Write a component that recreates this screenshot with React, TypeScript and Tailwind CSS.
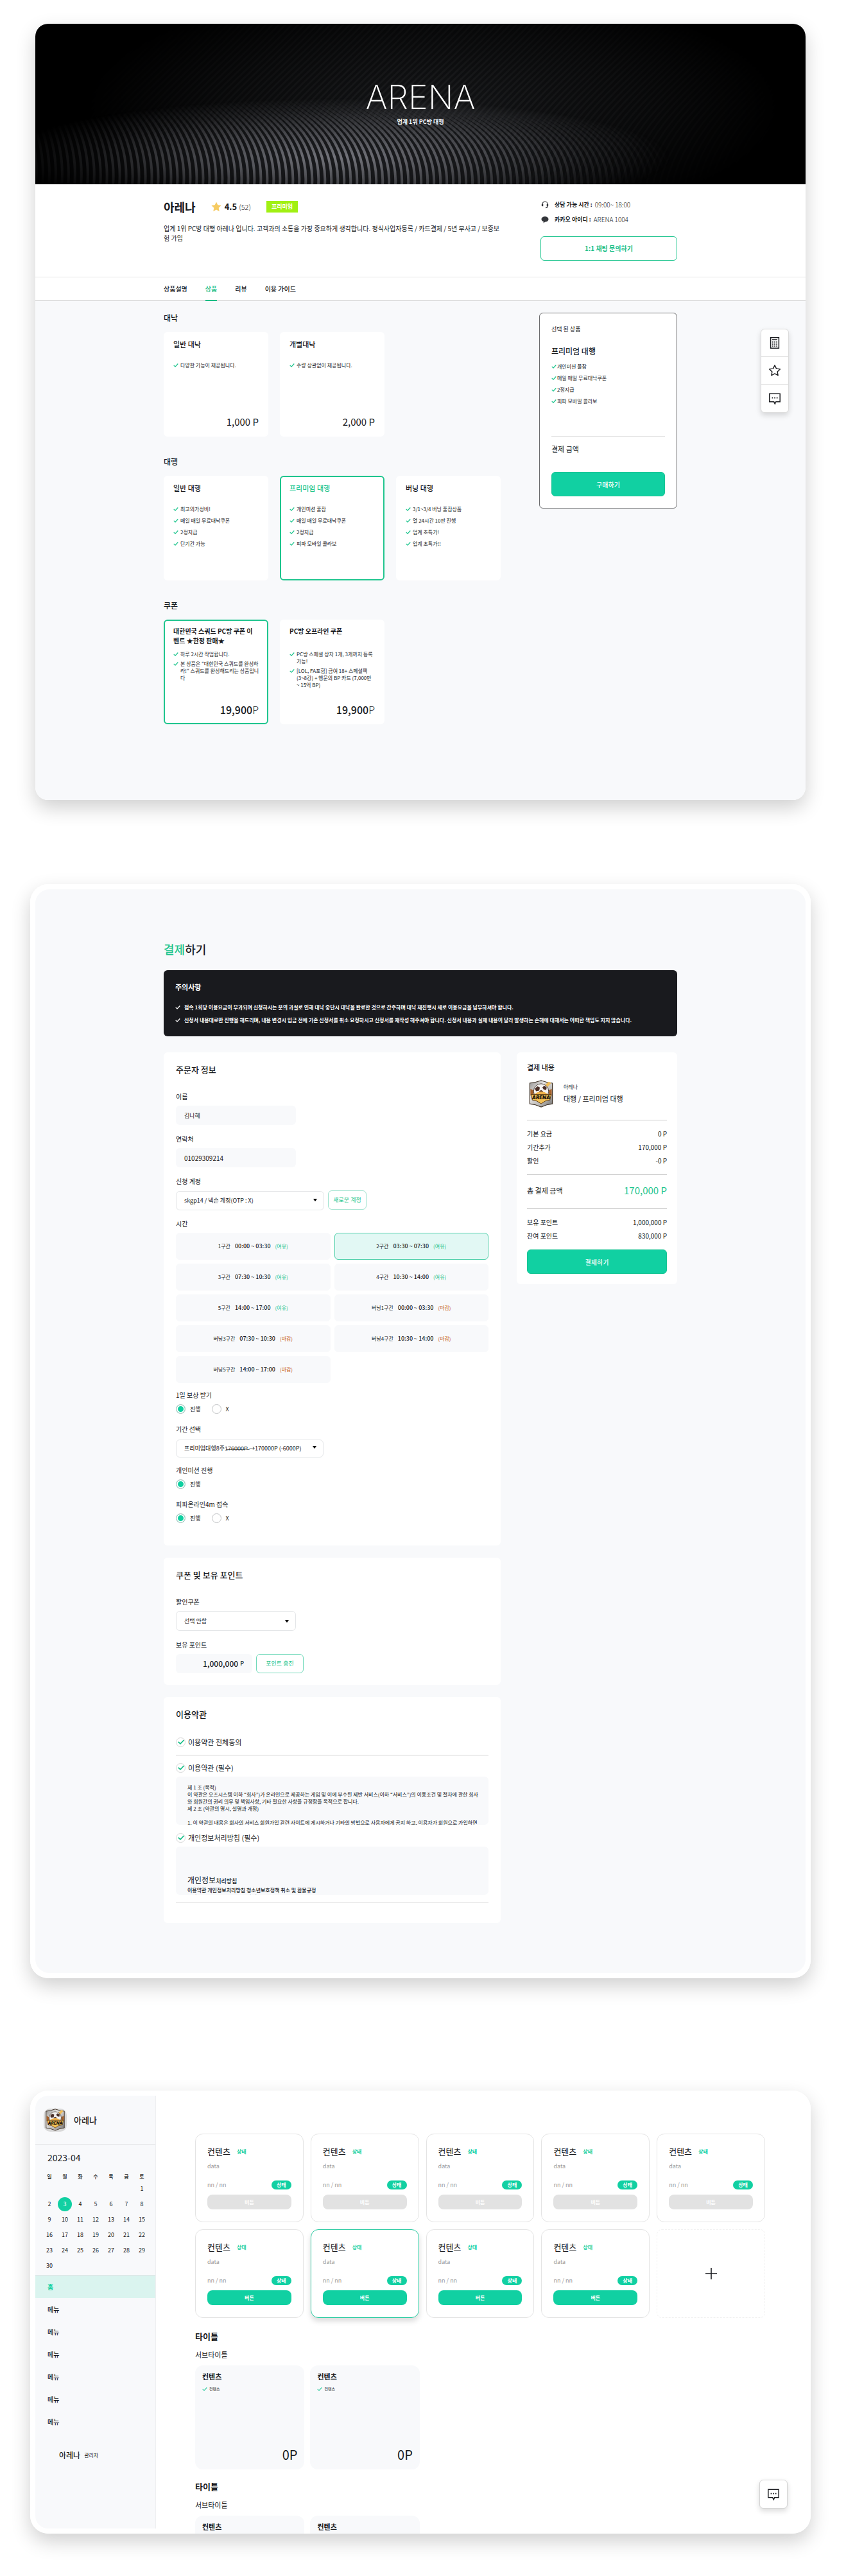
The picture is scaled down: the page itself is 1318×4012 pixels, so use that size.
import { useState, type ReactNode } from "react";

type Plan = { name: string; items: string[][]; price?: string; selected?: boolean };

const dealPlans: Plan[] = [
  { name: "일반 대낙", items: [["다양한 기능이 제공됩니다."]], price: "1,000 P" },
  { name: "개별대낙", items: [["수량 상관없이 제공됩니다."]], price: "2,000 P" },
];

const agencyPlans: Plan[] = [
  { name: "일반 대행", items: [["최고의가성비!"], ["매일 매일 무료대낙쿠폰"], ["2정지급"], ["단기간 가능"]] },
  {
    name: "프리미엄 대행",
    items: [["개인미션 풀참"], ["매일 매일 무료대낙쿠폰"], ["2정지급"], ["피파 모바일 콜라보"]],
    selected: true,
  },
  {
    name: "버닝 대행",
    items: [["3/1~3/4 버닝 풀참상품"], ["열 24시간 10판 진행"], ["업계 초특가!"], ["업계 초특가!!"]],
  },
];

const coupons = [
  {
    title: ["대한민국 스쿼드 PC방 쿠폰 이", "벤트 ★한정 판매★"],
    items: [["하루 2시간 작업합니다."], ['본 상품은 "대한민국 스쿼드를 완성하', '라!" 스쿼드를 완성해드리는 상품입니', "다"]],
    selected: true,
  },
  {
    title: ["PC방 오프라인 쿠폰"],
    items: [
      ["PC방 스페셜 상자 1개, 3개까지 등록", "가능!"],
      ["[LOL, FA포함] 금여 18+ 스페셜팩", "(3~8강) + 행운의 BP 카드 (7,000만", "~ 15억 BP)"],
    ],
    selected: false,
  },
];

const slots = [
  ["1구간", "00:00 ~ 03:30", true],
  ["2구간", "03:30 ~ 07:30", true],
  ["3구간", "07:30 ~ 10:30", true],
  ["4구간", "10:30 ~ 14:00", true],
  ["5구간", "14:00 ~ 17:00", true],
  ["버닝1구간", "00:00 ~ 03:30", false],
  ["버닝3구간", "07:30 ~ 10:30", false],
  ["버닝4구간", "10:30 ~ 14:00", false],
  ["버닝5구간", "14:00 ~ 17:00", false],
] as const;

const strike = (s: string) => s.split("").map((c) => c + "\u0336").join("");

function Check({ className = "" }: { className?: string }) {
  return (
    <svg viewBox="0 0 8 8" className={`size-2 shrink-0 ${className}`} fill="none" stroke="currentColor" strokeWidth="1.3" aria-hidden>
      <path d="M.7 3.9 3 6.1 7.3 1.5" />
    </svg>
  );
}

function Lines({ lines }: { lines: string[] }) {
  return (
    <span>
      {lines.map((l) => (
        <span key={l} className="block whitespace-nowrap">
          {l}
        </span>
      ))}
    </span>
  );
}

function ChatIcon() {
  return (
    <svg viewBox="0 0 20 20" className="size-5" fill="none" stroke="#1b1c20" strokeWidth="1.5" aria-hidden>
      <path d="M1.8 2.2h16.4v12.6h-6.4L10.3 18l-1.6-3.2H1.8z" />
      <path d="M5.6 8.6h1.7M9.2 8.6h1.7M12.8 8.6h1.7" strokeWidth="1.7" />
    </svg>
  );
}

function CalcIcon() {
  return (
    <svg viewBox="0 0 20 20" className="size-5" fill="none" stroke="#1b1c20" strokeWidth="1.5" aria-hidden>
      <path d="M3.6 1.7h12.8v16.6H3.6z" />
      <path d="M6 5h8" strokeWidth="1.4" />
      <path d="M6 8.6h1.8M9.1 8.6h1.8M12.2 8.6H14M6 11.8h1.8M9.1 11.8h1.8M12.2 11.8H14M6 15h1.8M9.1 15h1.8M12.2 15H14" strokeWidth="1.7" />
    </svg>
  );
}

function StarIcon() {
  return (
    <svg viewBox="0 0 20 20" className="size-5" fill="none" stroke="#1b1c20" strokeWidth="1.4" strokeLinejoin="round" aria-hidden>
      <path d="m10 1.8 2.5 5.3 5.8.8-4.2 4 1 5.8-5.1-2.8-5.1 2.8 1-5.8-4.2-4 5.8-.8z" />
    </svg>
  );
}

function Emblem({ id, className }: { id: string; className: string }) {
  return (
    <svg viewBox="0 0 38 44" className={className} role="img" aria-label="ARENA 엠블럼">
      <defs>
        <linearGradient id={id} x1="0" y1="0" x2="1" y2="1">
          <stop offset="0" stopColor="#8e8d8c" />
          <stop offset=".35" stopColor="#e3e1df" />
          <stop offset=".7" stopColor="#b4b2b0" />
          <stop offset="1" stopColor="#6f6d6b" />
        </linearGradient>
      </defs>
      <path d="M1 5 10 3.6 19 .8l9 2.8L37 5v33l-9 1.6L19 43 10 39.6 1 38z" fill={`url(#${id})`} stroke="#3f3328" strokeWidth="1.2" />
      <path d="M24 9 31 2.8l4 2L27.5 13z" fill="#f0bd58" />
      <path d="M2 14l5 3v5l-5 3zM36 14l-5 3v5l5 3z" fill="#a5602a" />
      <circle cx="19" cy="18" r="12" fill="#f4f2f0" stroke="#4a403a" />
      <path d="m13 10 4 2-1 5-5 1-2-4zM24 9l4 3-1 4-4-1-2-3zM19 16l3 2-1 4h-4l-1-4z" fill="#4a2f28" />
      <path d="M8 23q11-9 22 0z" fill="#f0b24a" />
      <path d="M3 23h32l-2 9-7 1.500L19 38l-7-4.500L5 32z" fill="#f5c255" stroke="#5b3a16" />
      <text x="19" y="31" textAnchor="middle" fontFamily="Inter" fontSize="8" fontWeight="900" fontStyle="italic" fill="#18120c">
        ARENA
      </text>
    </svg>
  );
}

function HeroPattern() {
  const ribs = Array.from({ length: 130 }, (_, i) => {
    const x = -60 + i * 10;
    const lean = 12 + i * 0.7;
    return `M${x} 262C${x + 6} 215 ${x - lean * 0.2} 175 ${x - lean} 145S${x - lean * 2.4} 100 ${x - lean * 3.4} 70`;
  }).join("");
  const grain = Array.from({ length: 150 }, (_, i) => {
    const x = -240 + i * 10;
    return `M${x} 260C${x + 20} 150 ${x + 120} 90 ${x + 210} -10`;
  }).join("");
  return (
    <svg viewBox="0 0 1200 250" preserveAspectRatio="xMidYMid slice" className="absolute inset-0 size-full" aria-hidden>
      <defs>
        <radialGradient id="heroGlow" gradientUnits="userSpaceOnUse" cx="0" cy="0" r="1" gradientTransform="translate(470 208) scale(520 92)">
          <stop offset="0" stopColor="#fff" />
          <stop offset=".4" stopColor="#999" />
          <stop offset=".75" stopColor="#333" />
          <stop offset="1" stopColor="#000" />
        </radialGradient>
        <radialGradient id="heroHaze" gradientUnits="userSpaceOnUse" cx="0" cy="0" r="1" gradientTransform="translate(620 130) scale(540 190)">
          <stop offset="0" stopColor="#fff" />
          <stop offset=".6" stopColor="#777" />
          <stop offset="1" stopColor="#000" />
        </radialGradient>
        <mask id="glowMask" maskUnits="userSpaceOnUse" x="0" y="0" width="1200" height="250">
          <rect width="1200" height="250" fill="url(#heroGlow)" />
        </mask>
        <mask id="hazeMask" maskUnits="userSpaceOnUse" x="0" y="0" width="1200" height="250">
          <rect width="1200" height="250" fill="url(#heroHaze)" />
        </mask>
      </defs>
      <rect width="1200" height="250" fill="#000" />
      <g mask="url(#hazeMask)">
        <rect width="1200" height="250" fill="#131416" />
        <path d={grain} fill="none" stroke="#1e1f21" strokeWidth="3" />
      </g>
      <g mask="url(#glowMask)">
        <rect width="1200" height="250" fill="#1b1c1f" />
        <path d={ribs} fill="none" stroke="#74757c" strokeWidth="4" />
      </g>
    </svg>
  );
}

function PlanCard({ plan }: { plan: Plan }) {
  return (
    <article
      className={`flex min-h-[163px] flex-col rounded-md border-2 px-[13px] pt-[9px] pb-[11px] ${
        plan.selected ? "border-[#1fc58e] bg-white" : "border-white bg-white"
      }`}
    >
      <h3 className={`text-[11px] leading-4 font-medium ${plan.selected ? "text-[#1fc58e]" : ""}`}>{plan.name}</h3>
      <ul className="mt-[19px] space-y-[6px] text-[8px] leading-3">
        {plan.items.map((it, i) => (
          <li key={i} className="flex items-center gap-[3px]">
            <Check className="text-[#1fc58e]" />
            <Lines lines={it} />
          </li>
        ))}
      </ul>
      {plan.price && <p className="mt-auto text-right text-[15px] leading-5">{plan.price}</p>}
    </article>
  );
}

function PlanSection({ title, children }: { title: string; children: ReactNode }) {
  return (
    <section className="mb-[31px]">
      <h2 className="text-xs leading-4 font-medium">{title}</h2>
      <div className="mt-[14px] grid grid-cols-3 gap-[18px]">{children}</div>
    </section>
  );
}

function ProductPage() {
  const tabs = ["상품설명", "상품", "리뷰", "이용 가이드"];
  return (
    <main className="relative mx-2 overflow-hidden rounded-[20px] bg-[#f8f9fb]">
      <header className="relative flex h-[250px] flex-col items-center overflow-hidden text-white">
        <HeroPattern />
        <p className="relative mt-[85px] font-[Inter] text-[52px] leading-[60px] font-extralight">ARENA</p>
        <p className="relative text-[9px] leading-4 font-bold">업계 1위 PC방 대행</p>
      </header>

      <section className="border-b border-[#e3e3e3] bg-white">
        <div className="mx-auto flex max-w-[800px] justify-between pb-[25px]">
          <div className="w-[525px] pt-[25px]">
            <div className="flex h-5 items-center">
              <h1 className="text-lg leading-5 font-bold">아레나</h1>
              <svg viewBox="0 0 16 16" className="ml-6 size-4" fill="#f6cb62" aria-hidden>
                <path d="m8 .4 2.300 4.900 5.300.7-3.900 3.700 1 5.500L8 12.600l-4.700 2.600 1-5.500L.4 6l5.300-.7z" />
              </svg>
              <span className="ml-[5px] text-[13px] font-bold">4.5</span>
              <span className="ml-[3px] text-[11px] font-light">(52)</span>
              <span className="ml-6 flex h-[18px] w-[49px] items-center justify-center bg-[#a1f013] text-[9px] font-bold text-white">프리미엄</span>
            </div>
            <p className="mt-4 text-[10px] leading-[15px]">
              업계 1위 PC방 대행 아레나 입니다. 고객과의 소통을 가장 중요하게 생각합니다. 정식사업자등록 / 카드결제 / 5년 무사고 / 보증보
              <br />험 가입
            </p>
          </div>
          <div className="w-[213px] pt-[22px] text-[9px] leading-5">
            <p className="flex items-center">
              <svg viewBox="0 0 12 12" className="ml-[1px] size-3" fill="none" stroke="#34363b" aria-hidden>
                <path d="M2 6V5a4 4 0 0 1 8 0v3.500q0 2-3 2.200" strokeWidth="1.200" />
                <path d="M1.500 5v3M2.600 5v3.300M10.500 5v3M9.400 5v3.300" strokeWidth="1.300" />
              </svg>
              <b className="ml-[9px] font-bold">상담 가능 시간 :</b>
              <span className="ml-1 text-[10px] font-light">09:00~ 18:00</span>
            </p>
            <p className="mt-[3px] flex items-center">
              <svg viewBox="0 0 12 12" className="ml-[1px] size-3" fill="#34363b" aria-hidden>
                <path d="M6 1.300c3.100 0 5.500 1.900 5.500 4.200S9.100 9.700 6 9.700L3.600 11.400l.3-2.200C1.800 8.500.5 7.200.5 5.500.5 3.200 2.900 1.300 6 1.300z" />
              </svg>
              <b className="ml-[9px] font-bold">카카오 아이디 :</b>
              <span className="ml-1 text-[10px] font-light">ARENA 1004</span>
            </p>
            <button className="mt-4 h-[38px] w-full rounded-md border border-[#1fc58e] text-[10px] font-bold text-[#12bd85]">1:1 채팅 문의하기</button>
          </div>
        </div>
      </section>

      <nav className="border-b border-[#c4c4c4] bg-white">
        <ul className="mx-auto flex h-9 max-w-[800px] gap-7 text-[10px] font-medium">
          {tabs.map((t, i) => (
            <li key={t}>
              <a
                href="#products"
                className={`-mb-px flex h-[37px] items-center border-b-2 ${i === 1 ? "border-[#12bd85] text-[#12bd85]" : "border-transparent"}`}
              >
                {t}
              </a>
            </li>
          ))}
        </ul>
      </nav>

      <div id="products" className="mx-auto flex max-w-[800px] items-start justify-between pt-[18px] pb-[87px]">
        <div className="w-[525px]">
          <PlanSection title="대낙">
            {dealPlans.map((p) => (
              <PlanCard key={p.name} plan={p} />
            ))}
          </PlanSection>
          <PlanSection title="대행">
            {agencyPlans.map((p) => (
              <PlanCard key={p.name} plan={p} />
            ))}
          </PlanSection>
          <PlanSection title="쿠폰">
            {coupons.map((c) => (
              <article
                key={c.title[0]}
                className={`flex min-h-[163px] flex-col rounded-md border-2 bg-white px-[13px] pt-2 pb-[11px] ${
                  c.selected ? "border-[#1fc58e]" : "border-white"
                }`}
              >
                <h3 className="min-h-[30px] text-[10px] leading-[15px] font-semibold">
                  <Lines lines={c.title} />
                </h3>
                <ul className="mt-2 space-y-1 text-[8px] leading-[11px]">
                  {c.items.map((it) => (
                    <li key={it[0]} className="flex gap-[3px]">
                      <Check className="mt-[2px] text-[#1fc58e]" />
                      <Lines lines={it} />
                    </li>
                  ))}
                </ul>
                <p className="mt-auto text-right text-base leading-5 font-medium">
                  19,900<span className="font-light">P</span>
                </p>
              </article>
            ))}
          </PlanSection>
        </div>

        <aside className="w-[215px] rounded-md border border-[#6b6c6e] bg-white px-[18px] pt-[17px] pb-[18px]">
          <p className="text-[9px] leading-4">선택 된 상품</p>
          <h2 className="mt-4 text-xs leading-5 font-medium">프리미엄 대행</h2>
          <ul className="mt-2 space-y-[6px] text-[8px] leading-3">
            {agencyPlans[1].items.map((it) => (
              <li key={it[0]} className="flex items-center gap-px">
                <Check className="text-[#1fc58e]" />
                {it[0]}
              </li>
            ))}
          </ul>
          <p className="mt-12 border-t border-[#dfdfdf] pt-[9px] text-[11px] leading-5">결제 금액</p>
          <button className="mt-[26px] h-[38px] w-full rounded-md border border-[#17c493] bg-[#11d0a2] text-[10px] font-medium text-white">구매하기</button>
        </aside>
      </div>

      <div className="absolute top-[475px] right-[26px] w-11 divide-y divide-[#e0e0e0] overflow-hidden rounded-md border border-[#dcdcdc] bg-white shadow-[0_4px_8px_rgba(0,0,0,0.14)]">
        {[
          ["계산기", <CalcIcon key="c" />],
          ["즐겨찾기", <StarIcon key="s" />],
          ["채팅", <ChatIcon key="t" />],
        ].map(([label, icon]) => (
          <button key={label as string} aria-label={label as string} className="flex h-[43px] w-full items-center justify-center">
            {icon}
          </button>
        ))}
      </div>
    </main>
  );
}

function SelectBox({ id, value, className }: { id: string; value: string; className: string }) {
  return (
    <div className={`relative ${className}`}>
      <select id={id} className="size-full appearance-none rounded-md border border-[#e4e6e8] bg-white pl-3 text-[9px]">
        <option>{value}</option>
      </select>
      <svg viewBox="0 0 6 4" className="pointer-events-none absolute top-1/2 right-[11px] h-1 w-[6px] -translate-y-1/2" aria-hidden>
        <path d="M0 0h6L3.600 3.400a.8.8 0 0 1-1.200 0z" />
      </svg>
    </div>
  );
}

function RadioRow({ legend, name, options, className }: { legend: string; name: string; options: string[]; className: string }) {
  return (
    <fieldset className={className}>
      <legend className="text-[10px] leading-[14px]">{legend}</legend>
      <div className="mt-[7px] flex gap-[17px]">
        {options.map((o, i) => (
          <label key={o} className="flex items-center gap-[7px] text-[9px] leading-[15px]">
            <input
              type="radio"
              name={name}
              defaultChecked={i === 0}
              className="size-[15px] appearance-none rounded-full border border-[#c2c4c6] shadow-[inset_0_0_0_2px_white] checked:bg-[#10cfa0]"
            />
            {o}
          </label>
        ))}
      </div>
    </fieldset>
  );
}

function Agree({ label, className }: { label: string; className: string }) {
  return (
    <label className={`flex items-center gap-1 text-[11px] leading-4 ${className}`}>
      <span className="relative flex size-[15px] items-center justify-center">
        <input type="checkbox" defaultChecked className="peer size-[15px] appearance-none rounded-full border border-[#d8d8d8]" />
        <svg viewBox="0 0 10 10" className="pointer-events-none absolute hidden size-[10px] peer-checked:block" fill="none" stroke="#12bd85" strokeWidth="1.700" aria-hidden>
          <path d="M.7 4.900 4 7.900 9.600 2" />
        </svg>
      </span>
      {label}
    </label>
  );
}

function SumRow({ label, value }: { label: string; value: string }) {
  return (
    <div className="flex justify-between leading-[21px]">
      <dt className="text-[10px]">{label}</dt>
      <dd className="text-[10px]">{value}</dd>
    </div>
  );
}

function CheckoutPage() {
  const [slot, setSlot] = useState(1);
  const label = "block text-[10px] leading-[14px]";
  return (
    <main className="rounded-[28px] bg-white p-2">
      <div className="rounded-[22px] bg-[#f8f9fb] pt-20 pb-[78px]">
        <div className="mx-auto max-w-[800px]">
          <h1 className="text-lg leading-[26px] font-medium">
            <span className="text-[#1fc58e]">결제</span>하기
          </h1>
          <section className="mt-5 rounded-md bg-[#191a1e] px-[18px] pt-[18px] pb-[15px] text-white">
            <h2 className="text-[11px] leading-4 font-bold">주의사항</h2>
            <ul className="mt-[14px] text-[8px] leading-5 font-bold whitespace-nowrap">
              {[
                "접속 1회당 이용요금이 부과되며 신청하시는 분의 과실로 인해 대낙 중단시 대낙을 완료한 것으로 간주하며 대낙 재진행시 새로 이용요금을 납부하셔야 합니다.",
                "신청서 내용대로만 진행을 해드리며, 내용 변경시 입금 전에 기존 신청서를 취소 요청하시고 신청서를 재작성 해주셔야 합니다. 신청서 내용과 실제 내용이 달라 발생하는 손해에 대해서는 어떠한 책임도 지지 않습니다.",
              ].map((t) => (
                <li key={t} className="flex items-center gap-[6px]">
                  <Check />
                  {t}
                </li>
              ))}
            </ul>
          </section>

          <div className="mt-[25px] flex items-start gap-[25px]">
            <form className="min-w-0 flex-1 space-y-[19px]" onSubmit={(e) => e.preventDefault()}>
              <section className="rounded-md bg-white px-[19px] pt-[17px] pb-[35px]">
                <h2 className="text-[13px] leading-5 font-medium">주문자 정보</h2>
                <label htmlFor="name" className={`${label} mt-[25px]`}>
                  이름
                </label>
                <input id="name" defaultValue="김나혜" className="mt-[7px] h-[30px] w-[187px] rounded-md bg-[#f8f9fb] px-[13px] text-[9px]" />
                <label htmlFor="phone" className={`${label} mt-[15px]`}>
                  연락처
                </label>
                <input id="phone" defaultValue="01029309214" className="mt-[7px] h-[30px] w-[187px] rounded-md bg-[#f8f9fb] px-[13px] text-[10px]" />
                <label htmlFor="account" className={`${label} mt-[15px]`}>
                  신청 계정
                </label>
                <div className="mt-[7px] flex gap-[6px]">
                  <SelectBox id="account" value="skgp14 / 넥슨 계정(OTP : X)" className="h-[30px] w-[231px]" />
                  <button className="h-[30px] w-[60px] rounded-md border border-[#9fe2ce] text-[9px] text-[#1fc58e]">새로운 계정</button>
                </div>
                <p className={`${label} mt-[15px]`}>시간</p>
                <div className="mt-[7px] grid grid-cols-2 gap-[6px]">
                  {slots.map(([name, time, open], i) => (
                    <button
                      key={name}
                      aria-pressed={slot === i}
                      onClick={() => setSlot(i)}
                      className={`flex h-[42px] items-center justify-center gap-[7px] rounded-md border text-[8px] ${
                        slot === i ? "border-[#4fcfa9] bg-[#e2f8f4]" : "border-[#f8f9fb] bg-[#f8f9fb]"
                      }`}
                    >
                      <span>{name}</span>
                      <span className="text-[9px] font-medium">{time}</span>
                      <span className={open ? "text-[#1fc58e]" : "text-[#c8641c]"}>{open ? "(여유)" : "(마감)"}</span>
                    </button>
                  ))}
                </div>
                <RadioRow className="mt-3" legend="1일 보상 받기" name="reward" options={["진행", "X"]} />
                <label htmlFor="period" className={`${label} mt-[17px]`}>
                  기간 선택
                </label>
                <SelectBox id="period" value={`프리미엄대행8주${strike("176000P")} →170000P (-6000P)`} className="mt-[7px] h-7 w-[230px]" />
                <RadioRow className="mt-[15px]" legend="개인미션 진행" name="mission" options={["진행"]} />
                <RadioRow className="mt-[17px]" legend="피파온라인4m 접속" name="mobile" options={["진행", "X"]} />
              </section>

              <section className="rounded-md bg-white px-[19px] pt-[17px] pb-[18px]">
                <h2 className="text-[13px] leading-5 font-medium">쿠폰 및 보유 포인트</h2>
                <label htmlFor="coupon" className={`${label} mt-[25px]`}>
                  할인쿠폰
                </label>
                <SelectBox id="coupon" value="선택 안함" className="mt-[7px] h-[31px] w-[187px]" />
                <p className={`${label} mt-[15px]`}>보유 포인트</p>
                <div className="mt-[7px] flex gap-[6px]">
                  <p className="flex h-[30px] w-[119px] items-center justify-end gap-[3px] rounded-md bg-[#f8f9fb] pr-[13px] text-xs font-medium">
                    1,000,000 <span className="text-[9px]">P</span>
                  </p>
                  <button className="h-[30px] w-[74px] rounded-md border border-[#6fd9b9] text-[9px] text-[#1fc58e]">포인트 충전</button>
                </div>
              </section>

              <section className="rounded-md bg-white px-[19px] pt-[17px] pb-[31px]">
                <h2 className="text-[13px] leading-5 font-medium">이용약관</h2>
                <Agree label="이용약관 전체동의" className="mt-[25px]" />
                <Agree label="이용약관 (필수)" className="mt-3 border-t border-[#cfcfcf] pt-[11px]" />
                <div className="mt-[6px] h-[75px] overflow-hidden rounded-md bg-[#f8f9fb] px-[18px] pt-[11px] text-[8px] leading-[11px] whitespace-nowrap">
                  <p>제 1 조 (목적)</p>
                  <p>이 약관은 오즈시스템 이하 “회사”)가 온라인으로 제공하는 게임 및 이에 부수된 제반 서비스(이하 “서비스”)의 이용조건 및 절차에 관한 회사</p>
                  <p>와 회원간의 권리 의무 및 책임사항, 기타 필요한 사항을 규정함을 목적으로 합니다.</p>
                  <p>제 2 조 (약관의 명시, 설명과 개정)</p>
                  <p className="mt-[11px]">1. 이 약관의 내용은 회사의 서비스 회원가입 관련 사이트에 게시하거나 기타의 방법으로 사용자에게 공지 하고, 이용자가 회원으로 가입하면</p>
                </div>
                <Agree label="개인정보처리방침 (필수)" className="mt-3" />
                <div className="mt-[6px] h-[75px] overflow-hidden rounded-md bg-[#f8f9fb] px-[18px] pt-11 text-[8px] leading-[11px] font-medium">
                  <h3 className="text-[9px] leading-4 font-medium">
                    <span className="text-xs font-normal">개인정보</span>처리방침
                  </h3>
                  <p>이용약관 개인정보처리방침 청소년보호정책 취소 및 환불규정</p>
                  <p>개인정보 처리방침을 준수하며 관련 법령을 따릅니다</p>
                </div>
                <hr className="mt-3 border-[#e0e0e0]" />
              </section>
            </form>

            <aside className="w-[250px] rounded-md bg-white px-4 pt-[15px] pb-4">
              <h2 className="text-[11px] leading-4 font-medium">결제 내용</h2>
              <div className="mt-3 flex border-b border-[#cacaca] pb-[19px]">
                <Emblem id="emblemOrder" className="ml-[3px] h-[43px] w-[38px]" />
                <div className="ml-4 pt-1">
                  <p className="text-[8px] leading-[14px]">아레나</p>
                  <p className="mt-[3px] text-[11px] leading-4">대행 / 프리미엄 대행</p>
                </div>
              </div>
              <dl className="border-b border-[#cacaca] pt-[10px] pb-[11px]">
                <SumRow label="기본 요금" value="0 P" />
                <SumRow label="기간추가" value="170,000 P" />
                <SumRow label="할인" value="-0 P" />
              </dl>
              <dl className="flex justify-between border-b border-[#cacaca] pt-3 pb-4 leading-6">
                <dt className="text-[11px]">총 결제 금액</dt>
                <dd className="text-[15px] text-[#1fc58e]">170,000 P</dd>
              </dl>
              <dl className="pt-[10px]">
                <SumRow label="보유 포인트" value="1,000,000 P" />
                <SumRow label="잔여 포인트" value="830,000 P" />
              </dl>
              <button className="mt-[11px] h-[38px] w-full rounded-md border border-[#17c493] bg-[#11d0a2] text-[10px] font-medium text-white">결제하기</button>
            </aside>
          </div>
        </div>
      </div>
    </main>
  );
}

function Calendar() {
  const cells: (number | null)[] = [...Array(6).fill(null), ...Array.from({ length: 30 }, (_, i) => i + 1), ...Array(6).fill(null)];
  const weeks = Array.from({ length: 6 }, (_, w) => cells.slice(w * 7, w * 7 + 7));
  return (
    <section className="border-b border-[#dfe0e2] pt-[10px] pb-[2px]">
      <h2 className="pl-[19px] text-sm leading-5">2023-04</h2>
      <table className="mt-[13px] ml-[10px] w-[168px] table-fixed text-center">
        <thead className="text-[8px]">
          <tr>
            {["일", "월", "화", "수", "목", "금", "토"].map((d) => (
              <th key={d} scope="col" className="h-[14px] p-0 leading-[14px] font-medium">
                {d}
              </th>
            ))}
          </tr>
        </thead>
        <tbody className="text-[9px]">
          {weeks.map((w, i) => (
            <tr key={i}>
              {w.map((d, j) => (
                <td key={j} className="h-6 p-0">
                  {d === 3 ? (
                    <span className="mx-auto flex size-[22px] items-center justify-center rounded-full bg-[#11d0a2] text-white">3</span>
                  ) : (
                    d
                  )}
                </td>
              ))}
            </tr>
          ))}
        </tbody>
      </table>
    </section>
  );
}

function ContentCard({ active, selected }: { active: boolean; selected?: boolean }) {
  return (
    <article
      className={`rounded-xl border bg-white px-[18px] pt-[17px] pb-[19px] ${
        selected ? "border-[#2ccba2] shadow-[0_5px_8px_rgba(0,0,0,0.15)]" : "border-[#e4e4e4]"
      }`}
    >
      <div className="flex items-center gap-[10px]">
        <h3 className="text-[13px] leading-5">컨텐츠</h3>
        <span className="text-[8px] font-bold text-[#11d0a2]">상태</span>
      </div>
      <p className="mt-[6px] text-[9px] leading-[14px] text-[#9a9a9a]">data</p>
      <div className="mt-[15px] flex items-center justify-between">
        <span className="text-[9px] leading-[14px] text-[#9a9a9a]">nn / nn</span>
        <span className="flex h-[14px] w-[31px] items-center justify-center rounded-full bg-[#11d0a2] text-[8px] font-bold text-white">상태</span>
      </div>
      <button
        disabled={!active}
        className={`mt-[8px] block h-[23px] w-full rounded-lg text-[8px] font-bold text-white ${active ? "bg-[#11d0a2]" : "bg-[#e2e2e2]"}`}
      >
        버튼
      </button>
    </article>
  );
}

function ContentSection() {
  return (
    <section>
      <h2 className="text-[13px] leading-5 font-bold">타이틀</h2>
      <p className="mt-2 text-[11px] leading-5">서브타이틀</p>
      <div className="mt-[7px] grid grid-cols-5 gap-[9px]">
        {[0, 1].map((i) => (
          <article key={i} className="flex h-[162px] flex-col rounded-xl bg-[#f8f9fb] px-[11px] pt-[9px] pb-[11px]">
            <h3 className="text-[11px] leading-4 font-semibold">컨텐츠</h3>
            <p className="mt-[7px] flex items-center gap-[3px] text-[6px] leading-[10px]">
              <Check className="text-[#3fcfa6]" />
              컨텐츠
            </p>
            <p className="mt-auto text-right text-xl leading-6">0P</p>
          </article>
        ))}
      </div>
    </section>
  );
}

function DashboardPage() {
  return (
    <main className="relative flex h-[690px] overflow-hidden rounded-[28px] bg-white">
      <aside className="my-2 ml-2 w-[188px] shrink-0 rounded-l-[20px] border-r border-[#eeeff1] bg-[#f8f9fb]">
        <div className="flex h-[76px] items-center gap-[11px] border-b border-[#dfe0e2] pl-[13px]">
          <span className="flex size-9 items-center justify-center rounded-[10px] bg-[#d9d9d9]">
            <Emblem id="emblemNav" className="h-[35px] w-[30px]" />
          </span>
          <span className="text-[13px] font-medium">아레나</span>
        </div>
        <Calendar />
        <nav className="text-[10px] font-medium">
          {["홈", "메뉴", "메뉴", "메뉴", "메뉴", "메뉴", "메뉴"].map((m, i) => (
            <a
              key={i}
              href="#menu"
              className={`flex h-[35px] items-center pl-[19px] ${i === 0 ? "bg-[#daf4ef] font-bold text-[#11d0a2]" : ""}`}
            >
              {m}
            </a>
          ))}
        </nav>
        <p className="mt-[25px] flex items-center gap-[6px] pl-[37px] text-xs leading-5 font-medium">
          아레나 <span className="text-[8px] font-normal">관리자</span>
        </p>
      </aside>

      <div className="flex-1 pt-[67px] pr-[71px] pl-[61px]">
        <div className="grid grid-cols-5 gap-[11px]">
          {Array.from({ length: 9 }, (_, i) => (
            <ContentCard key={i} active={i > 4} selected={i === 6} />
          ))}
          <button aria-label="추가" className="flex items-center justify-center rounded-lg border border-dashed border-[#f1f1f1]">
            <svg viewBox="0 0 18 18" className="size-[18px]" stroke="#1b1c20" strokeWidth="1.600" aria-hidden>
              <path d="M9 0v18M0 9h18" />
            </svg>
          </button>
        </div>
        <div className="mt-[19px] space-y-[17px]">
          <ContentSection />
          <ContentSection />
        </div>
      </div>

      <button
        aria-label="채팅"
        className="absolute right-9 bottom-[39px] flex h-[45px] w-11 items-center justify-center rounded-md border border-[#d4d4d4] bg-white shadow-[0_4px_8px_rgba(0,0,0,0.14)]"
      >
        <ChatIcon />
      </button>
    </main>
  );
}

export default function App() {
  return (
    <div className="bg-white pt-[37px] pr-[55px] pb-[66px] pl-[47px] font-['Noto_Sans_CJK_KR',sans-serif] text-[#17191d]">
      <div className="mx-2 rounded-[20px] shadow-[0_12px_30px_rgba(0,0,0,0.19)]">
        <div className="-mx-2">
          <ProductPage />
        </div>
      </div>
      <div className="mt-[131px] rounded-[28px] shadow-[0_12px_30px_rgba(0,0,0,0.19)]">
        <CheckoutPage />
      </div>
      <div className="mt-[175px] rounded-[28px] shadow-[0_12px_30px_rgba(0,0,0,0.19)]">
        <DashboardPage />
      </div>
    </div>
  );
}
